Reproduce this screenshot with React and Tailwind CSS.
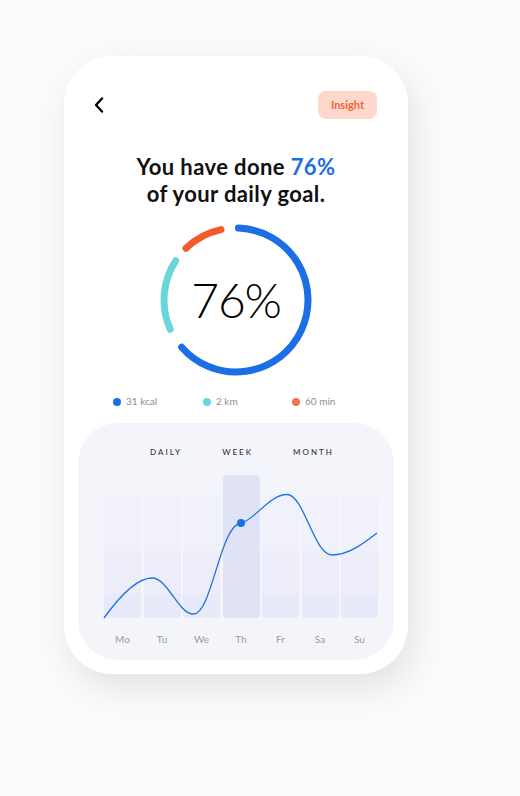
import React from 'react'

const days = ['Mo', 'Tu', 'We', 'Th', 'Fr', 'Sa', 'Su']

// arc helper: angles in degrees, clockwise from 12 o'clock
function arc(cx, cy, r, a0, a1) {
  const p = (a) => {
    const t = ((a - 90) * Math.PI) / 180
    return [cx + r * Math.cos(t), cy + r * Math.sin(t)]
  }
  const [x0, y0] = p(a0)
  const [x1, y1] = p(a1)
  const large = a1 - a0 > 180 ? 1 : 0
  return `M${x0} ${y0} A${r} ${r} 0 ${large} 1 ${x1} ${y1}`
}

function Ring() {
  return (
    <div className="relative w-[160px] h-[160px]">
      <svg width="160" height="160" viewBox="0 0 160 160" className="absolute inset-0">
        <path d={arc(80, 80, 72, 2, 229)} fill="none" stroke="#1b6ee3" strokeWidth="7" strokeLinecap="round" />
        <path d={arc(80, 80, 72, 246, 303)} fill="none" stroke="#6ad6dc" strokeWidth="7" strokeLinecap="round" />
        <path d={arc(80, 80, 72, 316, 348)} fill="none" stroke="#f4592b" strokeWidth="7" strokeLinecap="round" />
      </svg>
      <div className="absolute inset-0 flex items-center justify-center text-[48px] font-light text-black tracking-tight">
        76%
      </div>
    </div>
  )
}

function Legend({ color, label, className }) {
  return (
    <div className={`flex items-center gap-[5px] ${className || ''}`}>
      <span className={`w-[8px] h-[8px] rounded-full ${color}`} />
      <span className="text-[10px] text-[#8d8d95]">{label}</span>
    </div>
  )
}

function Chart() {
  return (
    <div className="relative ml-[26px] mr-[16px] mt-[17px]">
      <div className="grid grid-cols-7 gap-x-[2.5px] h-[143px] items-end">
        {days.map((d) =>
          d === 'Th' ? (
            <div key={d} className="h-[143px] rounded-[4px] bg-[#e0e3f5]" />
          ) : (
            <div key={d} className="h-[123px] rounded-[4px] overflow-hidden flex flex-col">
              <div className="h-[56px] bg-[#f0f1fa]" />
              <div className="h-[43px] bg-[#ecedf9]" />
              <div className="flex-1 bg-[#e8eaf9]" />
            </div>
          )
        )}
      </div>
      <svg width="273" height="143" viewBox="0 0 273 143" className="absolute left-0 top-0 overflow-visible">
        <path
          d="M0 143 C18 118 34 103 48 103 C64 103 74 139 89.5 139 C108 139 116 50 137 48 C150 46 165 19.5 183 19.5 C200 19.5 210 80 228 80 C245 80 260 68 273 58"
          fill="none"
          stroke="#1b74e0"
          strokeWidth="1.3"
        />
        <circle cx="137" cy="48" r="4" fill="#1b6ee3" />
      </svg>
      <div className="grid grid-cols-7 gap-x-[2.5px] mt-[14px]">
        {days.map((d) => (
          <div key={d} className="text-center text-[10px] text-[#9a9aa2]">{d}</div>
        ))}
      </div>
    </div>
  )
}

export default function App() {
  return (
    <div className="min-h-[796px] w-[520px] bg-[#fbfbfb] pt-[56px] pl-[64px]" style={{ fontFamily: 'Lato, "Open Sans", sans-serif' }}>
      <div className="w-[344px] h-[618px] bg-white rounded-[48px] shadow-[6px_14px_36px_rgba(0,0,0,0.10)] flex flex-col">
        <div className="flex items-center justify-between pt-[35px] pl-[30px] pr-[31px]">
          <svg width="10" height="16" viewBox="0 0 10 16">
            <path d="M8 1.5 L2 8 L8 14.5" fill="none" stroke="#000" strokeWidth="2.4" strokeLinecap="round" strokeLinejoin="round" />
          </svg>
          <div className="w-[59px] h-[28px] rounded-[8px] bg-[#fdd8cb] flex items-center justify-center text-[11px] font-bold text-[#f2643a]">
            Insight
          </div>
        </div>
        <div className="mt-[34px] text-center text-[22px] leading-[27px] tracking-[0.4px] font-bold text-[#111]">
          You have done <span className="text-[#1c6ee6]">76%</span>
          <br />
          of your daily goal.
        </div>
        <div className="flex justify-center mt-[13px]">
          <Ring />
        </div>
        <div className="flex pl-[49px] mt-[14px]">
          <Legend className="w-[90px]" color="bg-[#1b6ee3]" label="31 kcal" />
          <Legend className="w-[89px]" color="bg-[#6ad6dc]" label="2 km" />
          <Legend color="bg-[#f47157]" label="60 min" />
        </div>
        <div className="mx-[14px] mt-[14px] mb-[14px] flex-1 rounded-[40px] bg-[#f4f5fa] pt-[23px]">
          <div className="flex justify-center gap-[40px] pl-[12px] text-[8px] tracking-[2px] text-[#333] font-medium">
            <span>DAILY</span>
            <span>WEEK</span>
            <span>MONTH</span>
          </div>
          <Chart />
        </div>
      </div>
    </div>
  )
}
